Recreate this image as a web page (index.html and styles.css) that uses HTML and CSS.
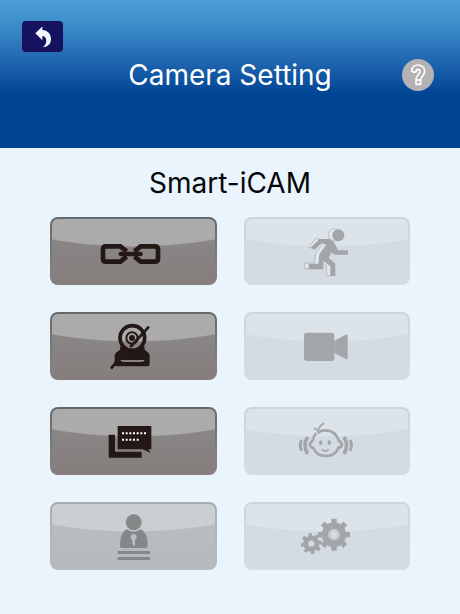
FILE: index.html
```
<!DOCTYPE html>
<html lang="en">
<head>
    <meta charset="UTF-8">
    <meta name="viewport" content="width=device-width, initial-scale=1.0">
    <title>Camera Setting</title>

    <link rel="stylesheet" href="styles.css">
</head>
<body>

    <header class="header">
        <button class="back" type="button" aria-label="Back">
            <svg viewBox="0 0 50 66">
                <path d="M1 21 L23 0 V11 C40 12 50 24 50 39 C50 54 40 64 24 65 C33 58 36 51 35 42 C34 34 30 30 23 30 V43 Z"/>
            </svg>
        </button>
        <div class="title-row">
            <h1>Camera Setting</h1>
            <button class="help" type="button" aria-label="Help">
                <svg viewBox="0 0 96 96">
                    <path d="M29 35 C29 12 68 12 68 37 C68 51 56 52 56 63 H42 C41 49 54 47 54 37 C54 29 43 29 42 38 Q34 42 29 35 Z"/>
                    <rect x="42" y="63" width="14" height="13" rx="2"/>
                </svg>
            </button>
        </div>
    </header>

    <main class="content">
        <h2>Smart-iCAM</h2>

        <div class="menu">
            <button class="tile" type="button" aria-label="Connection">
                <svg viewBox="0 0 210 150" fill="none" stroke="currentColor" stroke-width="14">
                    <path d="M86 76 L67 61 H24 Q15 61 15 70 V98 Q15 107 24 107 H67 L86 92"/>
                    <path d="M109 76 L128 61 H171 Q180 61 180 70 V98 Q180 107 171 107 H128 L109 92"/>
                    <path d="M68 84 H128" stroke-width="13" stroke-linecap="round"/>
                </svg>
            </button>

            <button class="tile faded" type="button" aria-label="Motion detection" disabled>
                <svg viewBox="0 0 210 150" fill="currentColor">
                    <g class="shade">
                        <circle cx="127" cy="26" r="18"/>
                        <path d="M71 37 L113 45 L127 71 L117 77 L99 93 L119 111 V149 H104 V119 L83 103 V128 H38 V111 H68 L71 83 L91 54 L78 49 L63 69 L51 63 Z"/>
                    </g>
                    <path d="M38 111 L50 113 M38 128 L50 130 M51 63 L56 65 M104 149 L115 150" stroke="currentColor"/>
                    <circle cx="139" cy="28" r="18"/>
                    <path d="M82 39 H112 L126 48 L138 73 H168 V86 H128 L118 79 L110 95 L130 113 V150 H115 V121 L94 105 V130 H50 V113 H79 L82 85 L102 56 L89 51 L68 71 L56 65 Z"/>
                </svg>
            </button>

            <button class="tile" type="button" aria-label="Camera off">
                <svg viewBox="0 0 210 150" fill="none" stroke="currentColor">
                    <circle cx="103" cy="51" r="37" stroke-width="11"/>
                    <circle cx="102" cy="51" r="17" stroke-width="6"/>
                    <circle cx="102" cy="51" r="9" fill="currentColor" stroke="none"/>
                    <path d="M67 76 Q84 86 103 86 Q122 86 139 76 L140 86 L151 95 Q155 99 155 105 V130 Q155 136 149 136 H56 Q50 136 50 130 V105 Q50 99 54 95 L66 86 Z" fill="currentColor" stroke="none"/>
                    <path d="M69 117 Q71 120 76 120 H131 Q136 120 138 117" class="slot" stroke-width="4"/>
                    <path d="M39 143 L56 122 M97 78 L153 17" stroke-width="8"/>
                </svg>
            </button>

            <button class="tile faded" type="button" aria-label="Recording" disabled>
                <svg viewBox="0 0 210 150" fill="currentColor">
                    <rect x="36" y="35" width="91" height="85" rx="8"/>
                    <path d="M127 60 L160 41 Q167 38 167 45 V110 Q167 117 160 113 L127 96 Z"/>
                </svg>
            </button>

            <button class="tile" type="button" aria-label="Messages">
                <svg viewBox="0 0 210 150" fill="currentColor">
                    <path d="M32 56 H51 V107 H131 V125 H32 Z"/>
                    <path d="M59 30 H160 V100 H151 L158 111 L134 100 H59 Z"/>
                    <path class="dots" d="M72 52 H146 M72 71 H124"/>
                </svg>
            </button>

            <button class="tile faded" type="button" aria-label="Cry detection" disabled>
                <svg viewBox="0 0 210 150" fill="none" stroke="currentColor" stroke-width="8">
                    <path d="M73 51 Q65 58 63 72 Q54 80 53 86 Q55 94 64 96 Q74 120 102 120 Q130 120 139 96 Q148 94 150 86 Q149 80 140 73 Q130 43 99 43 Q88 43 81 48"/>
                    <path d="M78 49 Q77 34 96 21 M75 44 Q74 37 65 37 M78 53 L90 44" stroke-width="5"/>
                    <ellipse cx="86" cy="80" rx="5" ry="7" fill="currentColor" stroke="none"/>
                    <ellipse cx="112" cy="80" rx="5" ry="7" fill="currentColor" stroke="none"/>
                    <path d="M90 100 Q100 111 110 100" stroke-width="5"/>
                    <path d="M47 63 Q31 88 47 114 M156 63 Q172 88 156 114" stroke-width="11"/>
                    <path d="M29 72 Q20 88 29 104 M174 72 Q183 88 174 104" stroke-width="9"/>
                </svg>
            </button>

            <button class="tile half" type="button" aria-label="Password" disabled>
                <svg viewBox="0 0 210 150" fill="currentColor">
                    <circle cx="107" cy="34" r="24"/>
                    <path d="M70 111 Q66 110 66 100 Q66 66 86 54 Q107 70 128 54 Q149 66 149 100 Q149 110 144 111 Z"/>
                    <g class="keyhole">
                        <circle cx="107" cy="78" r="9"/>
                        <path d="M103 84 H111 V104 H105 V98 H103 Z"/>
                    </g>
                    <rect x="59" y="120" width="97" height="9" rx="2"/>
                    <rect x="59" y="138" width="97" height="9" rx="2"/>
                </svg>
            </button>

            <button class="tile faded" type="button" aria-label="Settings" disabled>
                <svg viewBox="0 0 210 150" fill="currentColor" stroke="currentColor">
                    <circle cx="126" cy="71" r="37" stroke="none"/>
                    <path d="M126 23 V119 M78 71 H174 M92 37 L160 105 M160 37 L92 105" stroke-width="16"/>
                    <circle class="hole" cx="126" cy="71" r="16"/>
                    <circle class="hole" cx="126" cy="71" r="12"/>
                    <circle cx="58" cy="98" r="24" stroke="none"/>
                    <path d="M54 67 L62 129 M27 102 L89 94 M33 79 L83 117 M39 123 L77 73" stroke-width="11"/>
                    <circle class="hole" cx="58" cy="98" r="9"/>
                </svg>
            </button>
        </div>
    </main>

</body>
</html>
```
FILE: styles.css
```
*, *::before, *::after {
    margin: 0;
    padding: 0;
    box-sizing: border-box;
}

body {
    min-height: 100vh;
    background-color: #e9f4fd;
    font-family: Inter, "Liberation Sans", sans-serif;
    color: #050608;
}

button {
    border: none;
    cursor: pointer;
}

button:disabled {
    cursor: default;
}

h1, h2 {
    font-size: 28px;
    line-height: 36px;
    font-weight: 400;
    text-align: center;
}

.header {
    height: 148px;
    padding-top: 21px;
    background: linear-gradient(#4c9fd6, #3b8ac8 28px, #1c62ad 65px, #004494 95px);
    color: white;
}

.back {
    display: flex;
    justify-content: center;
    align-items: center;
    width: 41px;
    height: 31px;
    margin-left: 22px;
    border-radius: 4px;
    background-color: #17125f;
}

.back svg {
    width: 16px;
    height: 22px;
    fill: #f2f6ff;
}

.title-row {
    display: grid;
    grid-template-columns: 32px 1fr 32px;
    align-items: center;
    padding: 5px 26px 0;
}

.title-row h1 {
    grid-column: 2;
}

.help {
    width: 32px;
    height: 32px;
    border-radius: 50%;
    background-color: #b3b3b3;
}

.help svg {
    display: block;
    fill: none;
    stroke: white;
    stroke-width: 5;
    stroke-linejoin: round;
}

.content {
    padding: 17px 50px 44px;
}

.menu {
    display: grid;
    grid-template-columns: 1fr 1fr;
    gap: 27px;
    margin-top: 16px;
}

.tile {
    --gloss: #ababab;
    --top: #8b8a8a;
    --bottom: #857e7d;
    --edge: #63686a;
    --edge-bottom: #857e7d;
    display: flex;
    justify-content: center;
    align-items: center;
    height: 68px;
    border: 2px solid transparent;
    border-radius: 8px;
    color: #231815;
    background:
        radial-gradient(ellipse 150% 123px at 50% -95px, var(--gloss) 99%, transparent 100%) padding-box,
        linear-gradient(var(--top), var(--bottom)) padding-box,
        linear-gradient(var(--edge), var(--edge-bottom) 70%) border-box;
}

.tile svg {
    width: 70px;
    height: 50px;
}

.half {
    --gloss: #cad0d2;
    --top: #b9bec1;
    --bottom: #b6babd;
    --edge: #a5acaf;
    --edge-bottom: #b6babd;
    color: #858889;
}

.faded {
    --gloss: #dce4e9;
    --top: #d3dbe1;
    --bottom: #d4dbe3;
    --edge: #ccd5da;
    --edge-bottom: #d4dbe3;
    color: #a2a6aa;
}

.shade {
    fill: #e1e8ec;
    stroke: #a9aeb2;
    stroke-width: 2;
}

.slot {
    stroke: #aaa5a3;
}

.dots {
    fill: none;
    stroke: white;
    stroke-width: 6;
    stroke-dasharray: 6 5;
}

.keyhole {
    fill: #b9bec1;
}

.hole {
    fill: #d6dde2;
    stroke: #c1c7cb;
    stroke-width: 3;
}
```
